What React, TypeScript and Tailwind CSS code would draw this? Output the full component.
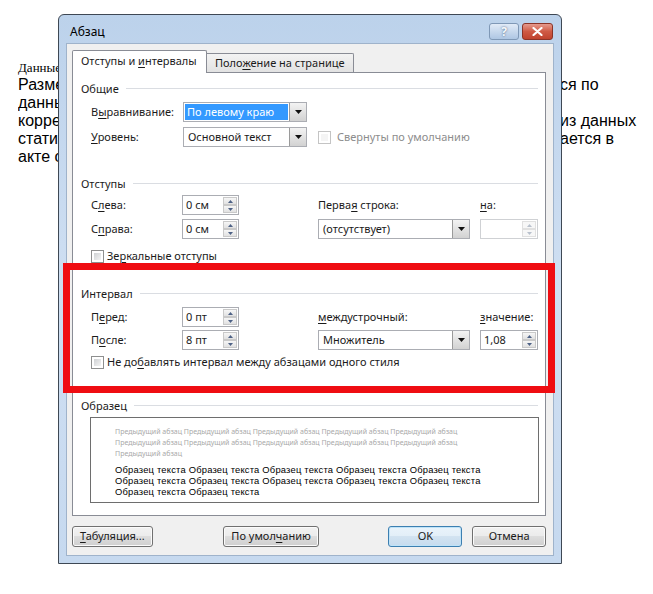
import type { ReactNode } from 'react';

const ui = "font-['Noto_Sans',sans-serif] text-[11px] text-[#1b1b1b]";

function K({ children }: { children: ReactNode }) {
  return <span className="underline underline-offset-[2px]">{children}</span>;
}

function GroupTitle({ children }: { children: ReactNode }) {
  return (
    <div className="flex h-[16px] items-center">
      <span className="leading-none">{children}</span>
      <div className="ml-[7px] h-px flex-1 bg-[#dadde2]" />
    </div>
  );
}

function ArrowDown() {
  return (
    <svg width="7" height="4" viewBox="0 0 7 4">
      <path d="M0 0h7L3.5 4z" fill="#111" />
    </svg>
  );
}

function Dropdown({ value, className, selected }: { value: string; className: string; selected?: boolean }) {
  return (
    <div className={`flex h-[20px] border border-[#abadb3] bg-white ${className}`}>
      <div className="flex flex-1 items-stretch p-px">
        {selected ? (
          <span className="flex flex-1 items-center bg-[#3399ff] pl-[2px] text-white">{value}</span>
        ) : (
          <span className="flex flex-1 items-center pl-[3px]">{value}</span>
        )}
      </div>
      <div className="flex w-[17px] items-center justify-center border-l border-[#9a9a9a] bg-gradient-to-b from-[#f3f3f3] to-[#d2d2d2]">
        <ArrowDown />
      </div>
    </div>
  );
}

function SpinHalf({ up, disabled }: { up?: boolean; disabled?: boolean }) {
  return (
    <div
      className={`flex flex-1 items-center justify-center border ${
        disabled ? 'border-[#e0e0e0] bg-[#f7f7f7]' : 'border-[#c9c9c9] bg-gradient-to-b from-[#f6f6f6] to-[#e1e1e1]'
      }`}
    >
      <svg width="5" height="3" viewBox="0 0 5 3">
        <path d={up ? 'M0 3h5L2.5 0z' : 'M0 0h5L2.5 3z'} fill={disabled ? '#b8c0cc' : '#4d6185'} />
      </svg>
    </div>
  );
}

function Spin({ value, className, disabled }: { value: string; className: string; disabled?: boolean }) {
  return (
    <div className={`flex h-[20px] border bg-white ${disabled ? 'border-[#cfd1d4]' : 'border-[#abadb3]'} ${className}`}>
      <span className="flex flex-1 items-center pl-[3px]">{value}</span>
      <div className="flex w-[15px] flex-col py-px pr-px">
        <SpinHalf up disabled={disabled} />
        <SpinHalf disabled={disabled} />
      </div>
    </div>
  );
}

function Check({ disabled }: { disabled?: boolean }) {
  return (
    <div className={`h-[13px] w-[13px] border p-[2px] ${disabled ? 'border-[#c4c4c4] bg-white' : 'border-[#8e8f8f] bg-white'}`}>
      <div
        className={`h-full w-full ${disabled ? 'bg-[#f4f4f4]' : 'bg-gradient-to-br from-[#cfd1d4] to-[#f4f4f4]'}`}
      />
    </div>
  );
}

function Button({ children, className, primary }: { children: ReactNode; className: string; primary?: boolean }) {
  return (
    <div
      className={`flex h-[21px] items-center justify-center rounded-[3px] border ${
        primary
          ? 'border-[#3c7fb1] bg-[linear-gradient(#eaf4fb,#e2eef8_50%,#d2e3f1_50%,#c6dbee)] shadow-[inset_0_0_0_1px_#bfe3f8]'
          : 'border-[#707070] bg-[linear-gradient(#f2f2f2,#ebebeb_50%,#dddddd_50%,#cfcfcf)] shadow-[inset_0_0_0_1px_#fbfbfb]'
      } ${className}`}
    >
      {children}
    </div>
  );
}

// document lines: the start of each line sits left of the dialog, the tail right of it
const docLines = [
  { left: 'Размещ', right: 'ся по' },
  { left: 'данных', right: '' },
  { left: 'коррек', right: 'из данных' },
  { left: 'статист', right: 'ается в' },
  { left: 'акте о', right: '' },
];

export default function App() {
  return (
    <div className="relative h-[594px] w-[653px] overflow-hidden bg-white">
      {/* document underneath the dialog */}
      <div className="pl-[18px] pt-[60px] text-black">
        <div className="h-[16px] whitespace-nowrap font-['Liberation_Serif',serif] text-[13px] leading-[16px]">
          Данные
        </div>
        {docLines.map((line, i) => (
          <div
            key={i}
            className="grid h-[18px] grid-cols-[542px_auto] font-['Liberation_Sans',Arial,sans-serif] text-[16px] leading-[18px]"
          >
            <span className="overflow-hidden whitespace-nowrap">{line.left}</span>
            <span className="whitespace-nowrap">{line.right}</span>
          </div>
        ))}
      </div>

      {/* paragraph dialog */}
      <div
        className={`absolute left-[58px] top-[14px] flex h-[550px] w-[504px] flex-col rounded-t-[6px] border border-[#3e4854] bg-gradient-to-b from-[#bcd2eb] via-[#cfdff2] to-[#c6d9ef] ${ui}`}
      >
        <div className="flex h-[28px] items-start pl-[11px] pr-[8px] pt-[8px]">
          <span className="mt-[1px] flex-1 text-[12px] leading-[16px] text-black">Абзац</span>
          <div className="flex gap-[3px]">
            <div className="flex h-[17px] w-[30px] items-center justify-center rounded-[3px] border border-[#7f98b6] bg-gradient-to-b from-[#e1ebf7] to-[#aec6e3]">
              <span className="text-[12px] font-bold leading-none text-[#f5f8fc] [text-shadow:0_0_2px_#3c5576]">?</span>
            </div>
            <div className="flex h-[17px] w-[31px] items-center justify-center rounded-[3px] border border-[#8b3428] bg-gradient-to-b from-[#e59a8d] via-[#cf5a45] to-[#c0432e]">
              <svg width="11" height="9" viewBox="0 0 11 9">
                <path d="M1.5 1l8 7M9.5 1l-8 7" stroke="#fff" strokeWidth="2.2" strokeLinecap="round" />
              </svg>
            </div>
          </div>
        </div>

        <div className="mx-[7px] mb-[7px] flex flex-1 flex-col border border-[#9fb3cb] bg-[#f0f0f0] pl-[5px] pr-[7px] pt-[6px]">
          {/* tabs */}
          <div className="flex h-[22px] items-end">
            <div className="relative z-10 -mb-px flex h-[23px] w-[135px] items-center rounded-t-[2px] border border-b-0 border-[#898c95] bg-white pb-px pl-[8px]">
              <span>
                Отступы и <K>и</K>нтервалы
              </span>
            </div>
            <div className="flex h-[19px] w-[147px] items-center rounded-tr-[2px] border border-b-0 border-l-0 border-[#898c95] bg-gradient-to-b from-[#f3f3f3] to-[#e2e2e2] pl-[8px]">
              <span>
                Поло<K>ж</K>ение на странице
              </span>
            </div>
          </div>

          <div className="flex h-[444px] flex-col border border-[#898c95] bg-white pl-[8px] pr-[7px] pt-[7px]">
            <GroupTitle>Общие</GroupTitle>
            <div className="ml-[10px] mt-[6px] flex items-center">
              <span className="w-[92px]">
                В<K>ы</K>равнивание:
              </span>
              <Dropdown value="По левому краю" className="w-[124px]" selected />
            </div>
            <div className="ml-[10px] mt-[5px] flex items-center">
              <span className="w-[92px]">
                <K>У</K>ровень:
              </span>
              <Dropdown value="Основной текст" className="w-[124px]" />
              <div className="ml-[11px]">
                <Check disabled />
              </div>
              <span className="ml-[6px] text-[#8d8d8d]">Свернуты по умолчанию</span>
            </div>

            <div className="mt-[28px]">
              <GroupTitle>Отступы</GroupTitle>
            </div>
            <div className="ml-[10px] mt-[4px] flex items-center">
              <span className="w-[91px]">
                С<K>л</K>ева:
              </span>
              <Spin value="0 см" className="w-[57px]" />
              <span className="ml-[79px] w-[162px]">
                Перва<K>я</K> строка:
              </span>
              <span>
                <K>н</K>а:
              </span>
            </div>
            <div className="ml-[10px] mt-[4px] flex items-center">
              <span className="w-[91px]">
                С<K>п</K>рава:
              </span>
              <Spin value="0 см" className="w-[57px]" />
              <Dropdown value="(отсутствует)" className="ml-[79px] w-[152px]" />
              <Spin value="" className="ml-[10px] w-[58px]" disabled />
            </div>
            <div className="ml-[10px] mt-[9px] flex h-[16px] items-center">
              <Check />
              <span className="ml-[3px]">
                Зе<K>р</K>кальные отступы
              </span>
            </div>

            <div className="mt-[21px]">
              <GroupTitle>Интервал</GroupTitle>
            </div>
            <div className="ml-[10px] mt-[6px] flex items-center">
              <span className="w-[91px]">
                П<K>е</K>ред:
              </span>
              <Spin value="0 пт" className="w-[57px]" />
              <span className="ml-[79px] w-[162px]">
                <K>м</K>еждустрочный:
              </span>
              <span>
                <K>з</K>начение:
              </span>
            </div>
            <div className="ml-[10px] mt-[3px] flex items-center">
              <span className="w-[91px]">
                П<K>о</K>сле:
              </span>
              <Spin value="8 пт" className="w-[57px]" />
              <Dropdown value="Множитель" className="ml-[79px] w-[152px]" />
              <Spin value="1,08" className="ml-[10px] w-[58px]" />
            </div>
            <div className="ml-[10px] mt-[4px] flex h-[16px] items-center">
              <Check />
              <span className="ml-[3px]">
                Не до<K>б</K>авлять интервал между абзацами одного стиля
              </span>
            </div>

            <div className="mt-[27px]">
              <GroupTitle>Образец</GroupTitle>
            </div>
            <div className="ml-[9px] mt-[4px] h-[86px] w-[449px] border border-[#6e6e6e] bg-white pl-[24px] pt-[8px]">
              <div className="whitespace-nowrap font-['Noto_Sans',sans-serif] text-[7px] leading-[11px] text-[#a9a9a9]">
                <div>Предыдущий абзац Предыдущий абзац Предыдущий абзац Предыдущий абзац Предыдущий абзац</div>
                <div>Предыдущий абзац Предыдущий абзац Предыдущий абзац Предыдущий абзац Предыдущий абзац</div>
                <div>Предыдущий абзац</div>
              </div>
              <div className="mt-[5px] whitespace-nowrap font-['Liberation_Sans',Arial,sans-serif] text-[9.4px] leading-[11px] tracking-[0.2px] text-black">
                <div>Образец текста Образец текста Образец текста Образец текста Образец текста</div>
                <div>Образец текста Образец текста Образец текста Образец текста Образец текста</div>
                <div>Образец текста Образец текста</div>
              </div>
            </div>
          </div>

          {/* bottom buttons */}
          <div className="mt-[10px] flex items-center">
            <Button className="w-[81px]">
              <span>
                <K>Т</K>абуляция...
              </span>
            </Button>
            <Button className="ml-[70px] w-[97px]">
              <span>
                По умол<K>ч</K>анию
              </span>
            </Button>
            <Button className="ml-[69px] w-[74px]" primary>
              <span>OK</span>
            </Button>
            <Button className="ml-[10px] w-[74px]">
              <span>Отмена</span>
            </Button>
          </div>
        </div>
      </div>

      {/* red highlight frame around the spacing group */}
      <div className="absolute left-[63px] top-[263px] h-[130px] w-[492px] border-[7px] border-[#ef0d12]" />
    </div>
  );
}
